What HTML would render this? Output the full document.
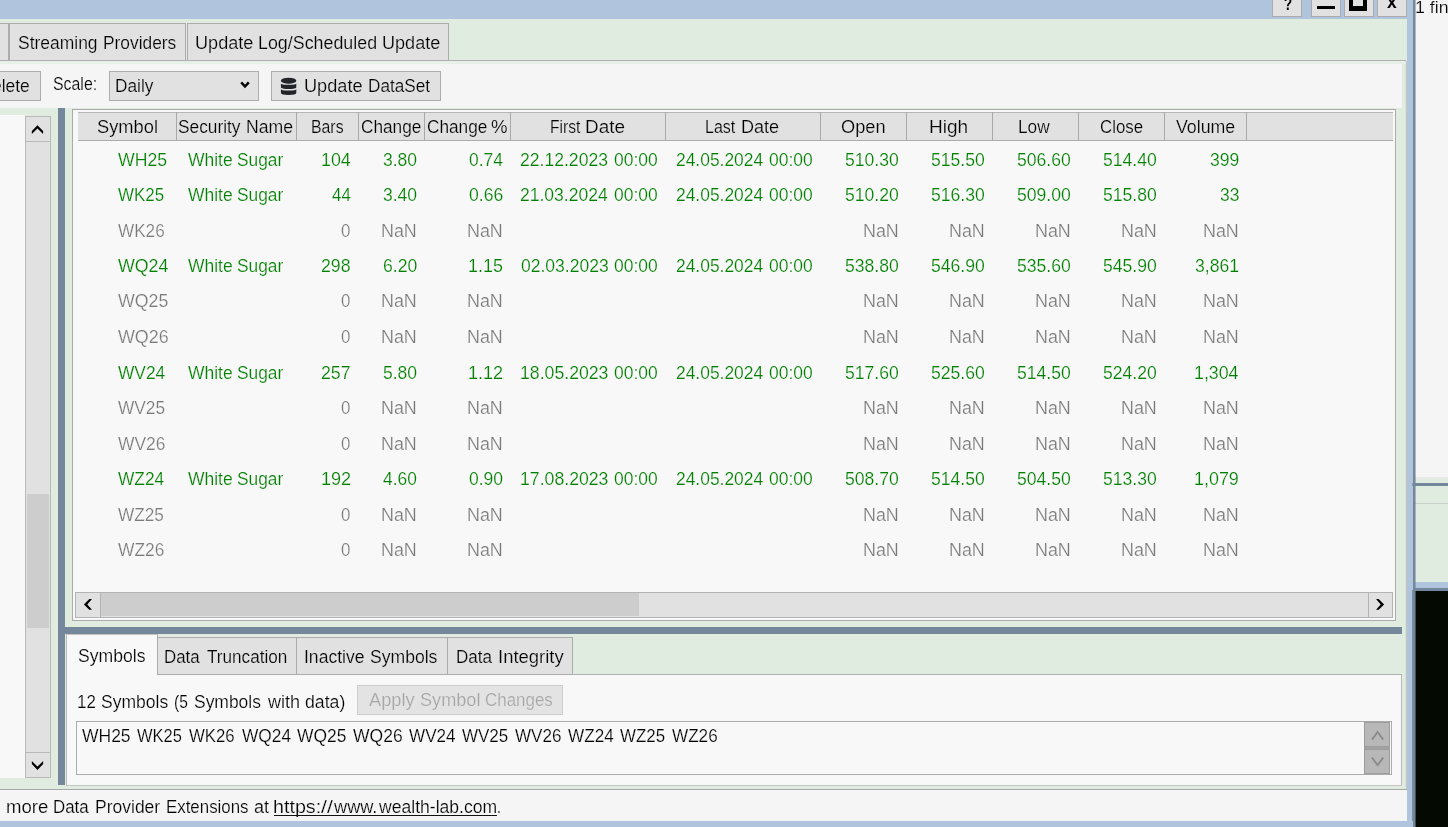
<!DOCTYPE html>
<html lang="en"><head><meta charset="utf-8"><title>Data Manager</title>
<style>
html,body{margin:0;padding:0}
body{width:1448px;height:827px;overflow:hidden;position:relative;background:#b0c4de;font-family:"Liberation Sans",sans-serif;}
#app{position:absolute;left:0;top:0;width:1448px;height:827px;overflow:hidden;will-change:transform}
#app>div,#app>svg,#app>span{position:absolute;display:block;box-sizing:content-box}
.t{font-size:18px;line-height:20px;white-space:nowrap;transform-origin:0 0;}
.u{text-decoration:underline;text-decoration-thickness:1px;text-underline-offset:2px}
</style></head><body><div id="app">
<div style="left:0px;top:0px;width:1448px;height:827px;background:#b0c4de;"></div>
<div style="left:0px;top:19px;width:1407px;height:802px;background:#e1ece1;"></div>
<div style="left:1413px;top:0px;width:2px;height:827px;background:#75889b;"></div>
<div style="left:1415px;top:0px;width:33px;height:477px;background:#f5f5f5;"></div>
<div style="left:1415px;top:477px;width:33px;height:2px;background:#e8e8e8;"></div>
<div style="left:1415px;top:479px;width:33px;height:4px;background:#e1ece1;"></div>
<div style="left:1412px;top:483px;width:36px;height:3px;background:#75889b;"></div>
<div style="left:1415px;top:486px;width:33px;height:96px;background:#e1ece1;"></div>
<div style="left:1415px;top:503px;width:33px;height:1px;background:#c9cfc9;"></div>
<div style="left:1415px;top:582px;width:33px;height:6px;background:#b0c4de;"></div>
<div style="left:1413px;top:588px;width:35px;height:3px;background:#75889b;"></div>
<div style="left:1415px;top:591px;width:33px;height:236px;background:#040a02;"></div>
<span class="t" style="left:1415px;top:-2.20px;color:#000;transform:scaleX(1.0446);font-size:17px;-webkit-text-stroke:0.2px #f5f5f5;">1 fin</span>
<div style="left:1272px;top:-4px;width:28px;height:19px;background:#e1e1e1;border:1px solid #acacac;"></div>
<div style="left:1311px;top:-4px;width:28px;height:19px;background:#e1e1e1;border:1px solid #acacac;"></div>
<div style="left:1344px;top:-4px;width:28px;height:19px;background:#e1e1e1;border:1px solid #acacac;"></div>
<div style="left:1377px;top:-4px;width:28px;height:19px;background:#e1e1e1;border:1px solid #acacac;"></div>
<span class="t" style="left:1284px;top:-6.00px;color:#000;transform:scaleX(0.7391);font-weight:bold;">?</span>
<div style="left:1316.5px;top:5.7px;width:18.5px;height:3.5px;background:#000;"></div>
<div style="left:1349.4px;top:-10px;width:10px;height:11.5px;border:4px solid #000;border-bottom-width:5px"></div>
<span class="t" style="left:1387px;top:-8.30px;color:#000;transform:scaleX(0.9687);font-weight:bold;">x</span>
<div style="left:-20px;top:23px;width:27px;height:36px;background:#e1e1e1;border:1px solid #acacac;"></div>
<div style="left:9px;top:23px;width:175px;height:36px;background:#e1e1e1;border:1px solid #acacac;"></div>
<div style="left:187px;top:23px;width:260px;height:36px;background:#e1e1e1;border:1px solid #acacac;"></div>
<div style="left:0px;top:60px;width:1406px;height:1px;background:#b0b0b0;"></div>
<div style="left:0px;top:61px;width:1407px;height:3px;background:#e6f0e6;"></div>
<div style="left:0px;top:64px;width:1402px;height:44.4px;background:#f5f5f5;"></div>
<span class="t" style="left:18px;top:32.80px;color:#000;transform:scaleX(0.9700);-webkit-text-stroke:0.2px #e1e1e1;">Streaming</span>
<span class="t" style="left:103px;top:32.80px;color:#000;transform:scaleX(0.9635);-webkit-text-stroke:0.2px #e1e1e1;">Providers</span>
<span class="t" style="left:195px;top:32.80px;color:#000;transform:scaleX(1.0054);-webkit-text-stroke:0.2px #e1e1e1;">Update</span>
<span class="t" style="left:258px;top:32.80px;color:#000;transform:scaleX(0.9915);-webkit-text-stroke:0.2px #e1e1e1;">Log/Scheduled</span>
<span class="t" style="left:382px;top:32.80px;color:#000;transform:scaleX(1.0036);-webkit-text-stroke:0.2px #e1e1e1;">Update</span>
<div style="left:-20px;top:71px;width:59px;height:28px;background:#e1e1e1;border:1px solid #adadad;"></div>
<span class="t" style="left:-8px;top:75.60px;color:#000;transform:scaleX(0.9679);-webkit-text-stroke:0.2px #e1e1e1;">elete</span>
<span class="t" style="left:53px;top:74.00px;color:#000;transform:scaleX(0.8821);-webkit-text-stroke:0.2px #f5f5f5;">Scale:</span>
<div style="left:109px;top:71px;width:148px;height:28px;background:#e1e1e1;border:1px solid #adadad;"></div>
<span class="t" style="left:115px;top:75.50px;color:#000;transform:scaleX(0.9583);-webkit-text-stroke:0.2px #e1e1e1;">Daily</span>
<svg style="left:238px;top:79px" width="14" height="12" viewBox="0 0 14 12"><path d="M3.2 3.3 L7 7.5 L10.8 3.3" fill="none" stroke="#000" stroke-width="2.5"/></svg>
<div style="left:271px;top:71px;width:168px;height:28px;background:#e1e1e1;border:1px solid #adadad;"></div>
<svg style="left:280px;top:77px" width="17" height="18" viewBox="0 0 17 18"><g fill="#212529">
<ellipse cx="8.6" cy="3.7" rx="7.7" ry="2.95"/>
<path d="M0.9 5.6 L0.9 6.4 Q0.9 7.7 8.6 7.7 Q16.3 7.7 16.3 6.4 L16.3 5.6 L16.3 10.2 Q16.3 12 8.6 12 Q0.9 12 0.9 10.2 Z"/>
<path d="M0.9 10.8 L0.9 11.9 Q0.9 13.5 8.6 13.5 Q16.3 13.5 16.3 11.9 L16.3 10.8 L16.3 15.8 Q16.3 18 8.6 18 Q0.9 18 0.9 15.8 Z"/>
</g></svg>
<span class="t" style="left:304px;top:75.50px;color:#000;transform:scaleX(1.0090);-webkit-text-stroke:0.2px #e1e1e1;">Update</span>
<span class="t" style="left:368px;top:75.50px;color:#000;transform:scaleX(0.9543);-webkit-text-stroke:0.2px #e1e1e1;">DataSet</span>
<div style="left:0px;top:115px;width:25px;height:663px;background:#f8f8f8;"></div>
<div style="left:25px;top:116px;width:26px;height:662px;background:#e1e1e1;"></div>
<div style="left:25px;top:116px;width:1px;height:662px;background:#b9b9b9;"></div>
<div style="left:50px;top:116px;width:1px;height:662px;background:#b9b9b9;"></div>
<div style="left:25px;top:116px;width:26px;height:1px;background:#b9b9b9;"></div>
<div style="left:25px;top:141px;width:26px;height:1px;background:#b9b9b9;"></div>
<div style="left:25px;top:752px;width:26px;height:1px;background:#b9b9b9;"></div>
<div style="left:25px;top:777px;width:26px;height:1px;background:#b9b9b9;"></div>
<div style="left:27px;top:494px;width:22.4px;height:134px;background:#cdcdcd;"></div>
<svg style="left:30px;top:124px" width="15" height="11" viewBox="0 0 15 11"><polygon points="1.85,9.90 1.85,6.90 7.45,1.20 13.10,6.90 13.10,9.90 7.45,4.50" fill="#000"/></svg>
<svg style="left:30px;top:760px" width="15" height="11" viewBox="0 0 15 11"><polygon points="1.85,1.10 1.85,4.10 7.45,9.90 13.15,4.10 13.15,1.10 7.45,6.60" fill="#000"/></svg>
<div style="left:58px;top:108.4px;width:7.2px;height:676.6px;background:#75889b;"></div>
<div style="left:65px;top:627px;width:1337px;height:7px;background:#75889b;"></div>
<div style="left:72px;top:109px;width:1322px;height:510px;background:#f8f8f8;border:1px solid #ababab;"></div>
<div style="left:78px;top:112px;width:1315px;height:28px;background:#e1e1e1;"></div>
<div style="left:78px;top:112px;width:1315px;height:1px;background:#b6b6b6;"></div>
<div style="left:78px;top:140px;width:1315px;height:1px;background:#acacac;"></div>
<div style="left:175.5px;top:112px;width:1px;height:28px;background:#a8a8a8;"></div>
<div style="left:296.0px;top:112px;width:1px;height:28px;background:#a8a8a8;"></div>
<div style="left:357.5px;top:112px;width:1px;height:28px;background:#a8a8a8;"></div>
<div style="left:424.0px;top:112px;width:1px;height:28px;background:#a8a8a8;"></div>
<div style="left:510.0px;top:112px;width:1px;height:28px;background:#a8a8a8;"></div>
<div style="left:665.0px;top:112px;width:1px;height:28px;background:#a8a8a8;"></div>
<div style="left:820.0px;top:112px;width:1px;height:28px;background:#a8a8a8;"></div>
<div style="left:906.0px;top:112px;width:1px;height:28px;background:#a8a8a8;"></div>
<div style="left:992.0px;top:112px;width:1px;height:28px;background:#a8a8a8;"></div>
<div style="left:1078.0px;top:112px;width:1px;height:28px;background:#a8a8a8;"></div>
<div style="left:1164.0px;top:112px;width:1px;height:28px;background:#a8a8a8;"></div>
<div style="left:1246.0px;top:112px;width:1px;height:28px;background:#a8a8a8;"></div>
<span class="t" style="left:97px;top:116.60px;color:#000;transform:scaleX(1.0155);-webkit-text-stroke:0.2px #e1e1e1;">Symbol</span>
<span class="t" style="left:178px;top:116.60px;color:#000;transform:scaleX(0.9610);-webkit-text-stroke:0.2px #e1e1e1;">Security</span>
<span class="t" style="left:246px;top:116.60px;color:#000;transform:scaleX(0.9803);-webkit-text-stroke:0.2px #e1e1e1;">Name</span>
<span class="t" style="left:311px;top:116.60px;color:#000;transform:scaleX(0.8793);-webkit-text-stroke:0.2px #e1e1e1;">Bars</span>
<span class="t" style="left:361px;top:116.60px;color:#000;transform:scaleX(0.9577);-webkit-text-stroke:0.2px #e1e1e1;">Change</span>
<span class="t" style="left:427px;top:116.60px;color:#000;transform:scaleX(0.9577);-webkit-text-stroke:0.2px #e1e1e1;">Change</span>
<span class="t" style="left:491px;top:116.60px;color:#000;transform:scaleX(1.0338);-webkit-text-stroke:0.2px #e1e1e1;">%</span>
<span class="t" style="left:550px;top:116.60px;color:#000;transform:scaleX(0.8683);-webkit-text-stroke:0.2px #e1e1e1;">First</span>
<span class="t" style="left:585px;top:116.60px;color:#000;transform:scaleX(1.0504);-webkit-text-stroke:0.2px #e1e1e1;">Date</span>
<span class="t" style="left:705px;top:116.60px;color:#000;transform:scaleX(0.8889);-webkit-text-stroke:0.2px #e1e1e1;">Last</span>
<span class="t" style="left:741px;top:116.60px;color:#000;transform:scaleX(1.0028);-webkit-text-stroke:0.2px #e1e1e1;">Date</span>
<span class="t" style="left:841px;top:116.60px;color:#000;transform:scaleX(1.0119);-webkit-text-stroke:0.2px #e1e1e1;">Open</span>
<span class="t" style="left:929px;top:116.60px;color:#000;transform:scaleX(1.0583);-webkit-text-stroke:0.2px #e1e1e1;">High</span>
<span class="t" style="left:1018px;top:116.60px;color:#000;transform:scaleX(0.9589);-webkit-text-stroke:0.2px #e1e1e1;">Low</span>
<span class="t" style="left:1100px;top:116.60px;color:#000;transform:scaleX(0.9368);-webkit-text-stroke:0.2px #e1e1e1;">Close</span>
<span class="t" style="left:1176px;top:116.60px;color:#000;transform:scaleX(0.9865);-webkit-text-stroke:0.2px #e1e1e1;">Volume</span>
<span class="t" style="left:118px;top:150.00px;color:#008000;transform:scaleX(0.9817);-webkit-text-stroke:0.2px #f8f8f8;">WH25</span>
<span class="t" style="left:188px;top:150.00px;color:#008000;transform:scaleX(0.9712);-webkit-text-stroke:0.2px #f8f8f8;">White</span>
<span class="t" style="left:237px;top:150.00px;color:#008000;transform:scaleX(0.9637);-webkit-text-stroke:0.2px #f8f8f8;">Sugar</span>
<span class="t" style="left:321px;top:150.00px;color:#008000;transform:scaleX(0.9897);-webkit-text-stroke:0.2px #f8f8f8;">104</span>
<span class="t" style="left:383px;top:150.00px;color:#008000;transform:scaleX(0.9735);-webkit-text-stroke:0.2px #f8f8f8;">3.80</span>
<span class="t" style="left:469px;top:150.00px;color:#008000;transform:scaleX(0.9678);-webkit-text-stroke:0.2px #f8f8f8;">0.74</span>
<span class="t" style="left:520px;top:150.00px;color:#008000;transform:scaleX(0.9762);-webkit-text-stroke:0.2px #f8f8f8;">22.12.2023</span>
<span class="t" style="left:614px;top:150.00px;color:#008000;transform:scaleX(0.9702);-webkit-text-stroke:0.2px #f8f8f8;">00:00</span>
<span class="t" style="left:676px;top:150.00px;color:#008000;transform:scaleX(0.9673);-webkit-text-stroke:0.2px #f8f8f8;">24.05.2024</span>
<span class="t" style="left:769px;top:150.00px;color:#008000;transform:scaleX(0.9702);-webkit-text-stroke:0.2px #f8f8f8;">00:00</span>
<span class="t" style="left:845px;top:150.00px;color:#008000;transform:scaleX(0.9767);-webkit-text-stroke:0.2px #f8f8f8;">510.30</span>
<span class="t" style="left:931px;top:150.00px;color:#008000;transform:scaleX(0.9767);-webkit-text-stroke:0.2px #f8f8f8;">515.50</span>
<span class="t" style="left:1017px;top:150.00px;color:#008000;transform:scaleX(0.9767);-webkit-text-stroke:0.2px #f8f8f8;">506.60</span>
<span class="t" style="left:1103px;top:150.00px;color:#008000;transform:scaleX(0.9767);-webkit-text-stroke:0.2px #f8f8f8;">514.40</span>
<span class="t" style="left:1210px;top:150.00px;color:#008000;transform:scaleX(0.9758);-webkit-text-stroke:0.2px #f8f8f8;">399</span>
<span class="t" style="left:118px;top:185.00px;color:#008000;transform:scaleX(0.9398);-webkit-text-stroke:0.2px #f8f8f8;">WK25</span>
<span class="t" style="left:188px;top:185.00px;color:#008000;transform:scaleX(0.9712);-webkit-text-stroke:0.2px #f8f8f8;">White</span>
<span class="t" style="left:237px;top:185.00px;color:#008000;transform:scaleX(0.9637);-webkit-text-stroke:0.2px #f8f8f8;">Sugar</span>
<span class="t" style="left:332px;top:185.00px;color:#008000;transform:scaleX(0.9393);-webkit-text-stroke:0.2px #f8f8f8;">44</span>
<span class="t" style="left:383px;top:185.00px;color:#008000;transform:scaleX(0.9735);-webkit-text-stroke:0.2px #f8f8f8;">3.40</span>
<span class="t" style="left:469px;top:185.00px;color:#008000;transform:scaleX(0.9764);-webkit-text-stroke:0.2px #f8f8f8;">0.66</span>
<span class="t" style="left:520px;top:185.00px;color:#008000;transform:scaleX(0.9729);-webkit-text-stroke:0.2px #f8f8f8;">21.03.2024</span>
<span class="t" style="left:614px;top:185.00px;color:#008000;transform:scaleX(0.9702);-webkit-text-stroke:0.2px #f8f8f8;">00:00</span>
<span class="t" style="left:676px;top:185.00px;color:#008000;transform:scaleX(0.9673);-webkit-text-stroke:0.2px #f8f8f8;">24.05.2024</span>
<span class="t" style="left:769px;top:185.00px;color:#008000;transform:scaleX(0.9702);-webkit-text-stroke:0.2px #f8f8f8;">00:00</span>
<span class="t" style="left:845px;top:185.00px;color:#008000;transform:scaleX(0.9767);-webkit-text-stroke:0.2px #f8f8f8;">510.20</span>
<span class="t" style="left:931px;top:185.00px;color:#008000;transform:scaleX(0.9767);-webkit-text-stroke:0.2px #f8f8f8;">516.30</span>
<span class="t" style="left:1017px;top:185.00px;color:#008000;transform:scaleX(0.9767);-webkit-text-stroke:0.2px #f8f8f8;">509.00</span>
<span class="t" style="left:1103px;top:185.00px;color:#008000;transform:scaleX(0.9767);-webkit-text-stroke:0.2px #f8f8f8;">515.80</span>
<span class="t" style="left:1220px;top:185.00px;color:#008000;transform:scaleX(0.9697);-webkit-text-stroke:0.2px #f8f8f8;">33</span>
<span class="t" style="left:118px;top:221.00px;color:#7a7a7a;transform:scaleX(0.9522);-webkit-text-stroke:0.2px #f8f8f8;">WK26</span>
<span class="t" style="left:341px;top:221.00px;color:#7a7a7a;transform:scaleX(0.9384);-webkit-text-stroke:0.2px #f8f8f8;">0</span>
<span class="t" style="left:381px;top:221.00px;color:#7a7a7a;transform:scaleX(0.9939);-webkit-text-stroke:0.2px #f8f8f8;">NaN</span>
<span class="t" style="left:467px;top:221.00px;color:#7a7a7a;transform:scaleX(0.9939);-webkit-text-stroke:0.2px #f8f8f8;">NaN</span>
<span class="t" style="left:863px;top:221.00px;color:#7a7a7a;transform:scaleX(0.9939);-webkit-text-stroke:0.2px #f8f8f8;">NaN</span>
<span class="t" style="left:949px;top:221.00px;color:#7a7a7a;transform:scaleX(0.9939);-webkit-text-stroke:0.2px #f8f8f8;">NaN</span>
<span class="t" style="left:1035px;top:221.00px;color:#7a7a7a;transform:scaleX(0.9939);-webkit-text-stroke:0.2px #f8f8f8;">NaN</span>
<span class="t" style="left:1121px;top:221.00px;color:#7a7a7a;transform:scaleX(0.9939);-webkit-text-stroke:0.2px #f8f8f8;">NaN</span>
<span class="t" style="left:1203px;top:221.00px;color:#7a7a7a;transform:scaleX(0.9939);-webkit-text-stroke:0.2px #f8f8f8;">NaN</span>
<span class="t" style="left:118px;top:256.00px;color:#008000;transform:scaleX(0.9881);-webkit-text-stroke:0.2px #f8f8f8;">WQ24</span>
<span class="t" style="left:188px;top:256.00px;color:#008000;transform:scaleX(0.9712);-webkit-text-stroke:0.2px #f8f8f8;">White</span>
<span class="t" style="left:237px;top:256.00px;color:#008000;transform:scaleX(0.9637);-webkit-text-stroke:0.2px #f8f8f8;">Sugar</span>
<span class="t" style="left:321px;top:256.00px;color:#008000;transform:scaleX(0.9827);-webkit-text-stroke:0.2px #f8f8f8;">298</span>
<span class="t" style="left:383px;top:256.00px;color:#008000;transform:scaleX(0.9793);-webkit-text-stroke:0.2px #f8f8f8;">6.20</span>
<span class="t" style="left:468px;top:256.00px;color:#008000;transform:scaleX(0.9942);-webkit-text-stroke:0.2px #f8f8f8;">1.15</span>
<span class="t" style="left:521px;top:256.00px;color:#008000;transform:scaleX(0.9740);-webkit-text-stroke:0.2px #f8f8f8;">02.03.2023</span>
<span class="t" style="left:614px;top:256.00px;color:#008000;transform:scaleX(0.9702);-webkit-text-stroke:0.2px #f8f8f8;">00:00</span>
<span class="t" style="left:676px;top:256.00px;color:#008000;transform:scaleX(0.9673);-webkit-text-stroke:0.2px #f8f8f8;">24.05.2024</span>
<span class="t" style="left:769px;top:256.00px;color:#008000;transform:scaleX(0.9702);-webkit-text-stroke:0.2px #f8f8f8;">00:00</span>
<span class="t" style="left:845px;top:256.00px;color:#008000;transform:scaleX(0.9767);-webkit-text-stroke:0.2px #f8f8f8;">538.80</span>
<span class="t" style="left:931px;top:256.00px;color:#008000;transform:scaleX(0.9767);-webkit-text-stroke:0.2px #f8f8f8;">546.90</span>
<span class="t" style="left:1017px;top:256.00px;color:#008000;transform:scaleX(0.9767);-webkit-text-stroke:0.2px #f8f8f8;">535.60</span>
<span class="t" style="left:1103px;top:256.00px;color:#008000;transform:scaleX(0.9767);-webkit-text-stroke:0.2px #f8f8f8;">545.90</span>
<span class="t" style="left:1195px;top:256.00px;color:#008000;transform:scaleX(0.9789);-webkit-text-stroke:0.2px #f8f8f8;">3,861</span>
<span class="t" style="left:118px;top:291.00px;color:#7a7a7a;transform:scaleX(0.9861);-webkit-text-stroke:0.2px #f8f8f8;">WQ25</span>
<span class="t" style="left:341px;top:291.00px;color:#7a7a7a;transform:scaleX(0.9384);-webkit-text-stroke:0.2px #f8f8f8;">0</span>
<span class="t" style="left:381px;top:291.00px;color:#7a7a7a;transform:scaleX(0.9939);-webkit-text-stroke:0.2px #f8f8f8;">NaN</span>
<span class="t" style="left:467px;top:291.00px;color:#7a7a7a;transform:scaleX(0.9939);-webkit-text-stroke:0.2px #f8f8f8;">NaN</span>
<span class="t" style="left:863px;top:291.00px;color:#7a7a7a;transform:scaleX(0.9939);-webkit-text-stroke:0.2px #f8f8f8;">NaN</span>
<span class="t" style="left:949px;top:291.00px;color:#7a7a7a;transform:scaleX(0.9939);-webkit-text-stroke:0.2px #f8f8f8;">NaN</span>
<span class="t" style="left:1035px;top:291.00px;color:#7a7a7a;transform:scaleX(0.9939);-webkit-text-stroke:0.2px #f8f8f8;">NaN</span>
<span class="t" style="left:1121px;top:291.00px;color:#7a7a7a;transform:scaleX(0.9939);-webkit-text-stroke:0.2px #f8f8f8;">NaN</span>
<span class="t" style="left:1203px;top:291.00px;color:#7a7a7a;transform:scaleX(0.9939);-webkit-text-stroke:0.2px #f8f8f8;">NaN</span>
<span class="t" style="left:118px;top:327.00px;color:#7a7a7a;transform:scaleX(0.9920);-webkit-text-stroke:0.2px #f8f8f8;">WQ26</span>
<span class="t" style="left:341px;top:327.00px;color:#7a7a7a;transform:scaleX(0.9384);-webkit-text-stroke:0.2px #f8f8f8;">0</span>
<span class="t" style="left:381px;top:327.00px;color:#7a7a7a;transform:scaleX(0.9939);-webkit-text-stroke:0.2px #f8f8f8;">NaN</span>
<span class="t" style="left:467px;top:327.00px;color:#7a7a7a;transform:scaleX(0.9939);-webkit-text-stroke:0.2px #f8f8f8;">NaN</span>
<span class="t" style="left:863px;top:327.00px;color:#7a7a7a;transform:scaleX(0.9939);-webkit-text-stroke:0.2px #f8f8f8;">NaN</span>
<span class="t" style="left:949px;top:327.00px;color:#7a7a7a;transform:scaleX(0.9939);-webkit-text-stroke:0.2px #f8f8f8;">NaN</span>
<span class="t" style="left:1035px;top:327.00px;color:#7a7a7a;transform:scaleX(0.9939);-webkit-text-stroke:0.2px #f8f8f8;">NaN</span>
<span class="t" style="left:1121px;top:327.00px;color:#7a7a7a;transform:scaleX(0.9939);-webkit-text-stroke:0.2px #f8f8f8;">NaN</span>
<span class="t" style="left:1203px;top:327.00px;color:#7a7a7a;transform:scaleX(0.9939);-webkit-text-stroke:0.2px #f8f8f8;">NaN</span>
<span class="t" style="left:118px;top:363.00px;color:#008000;transform:scaleX(0.9628);-webkit-text-stroke:0.2px #f8f8f8;">WV24</span>
<span class="t" style="left:188px;top:363.00px;color:#008000;transform:scaleX(0.9712);-webkit-text-stroke:0.2px #f8f8f8;">White</span>
<span class="t" style="left:237px;top:363.00px;color:#008000;transform:scaleX(0.9637);-webkit-text-stroke:0.2px #f8f8f8;">Sugar</span>
<span class="t" style="left:321px;top:363.00px;color:#008000;transform:scaleX(0.9862);-webkit-text-stroke:0.2px #f8f8f8;">257</span>
<span class="t" style="left:383px;top:363.00px;color:#008000;transform:scaleX(0.9735);-webkit-text-stroke:0.2px #f8f8f8;">5.80</span>
<span class="t" style="left:468px;top:363.00px;color:#008000;transform:scaleX(1.0003);-webkit-text-stroke:0.2px #f8f8f8;">1.12</span>
<span class="t" style="left:520px;top:363.00px;color:#008000;transform:scaleX(0.9818);-webkit-text-stroke:0.2px #f8f8f8;">18.05.2023</span>
<span class="t" style="left:614px;top:363.00px;color:#008000;transform:scaleX(0.9702);-webkit-text-stroke:0.2px #f8f8f8;">00:00</span>
<span class="t" style="left:676px;top:363.00px;color:#008000;transform:scaleX(0.9673);-webkit-text-stroke:0.2px #f8f8f8;">24.05.2024</span>
<span class="t" style="left:769px;top:363.00px;color:#008000;transform:scaleX(0.9702);-webkit-text-stroke:0.2px #f8f8f8;">00:00</span>
<span class="t" style="left:845px;top:363.00px;color:#008000;transform:scaleX(0.9767);-webkit-text-stroke:0.2px #f8f8f8;">517.60</span>
<span class="t" style="left:931px;top:363.00px;color:#008000;transform:scaleX(0.9767);-webkit-text-stroke:0.2px #f8f8f8;">525.60</span>
<span class="t" style="left:1017px;top:363.00px;color:#008000;transform:scaleX(0.9767);-webkit-text-stroke:0.2px #f8f8f8;">514.50</span>
<span class="t" style="left:1103px;top:363.00px;color:#008000;transform:scaleX(0.9767);-webkit-text-stroke:0.2px #f8f8f8;">524.20</span>
<span class="t" style="left:1194px;top:363.00px;color:#008000;transform:scaleX(0.9879);-webkit-text-stroke:0.2px #f8f8f8;">1,304</span>
<span class="t" style="left:118px;top:398.00px;color:#7a7a7a;transform:scaleX(0.9606);-webkit-text-stroke:0.2px #f8f8f8;">WV25</span>
<span class="t" style="left:341px;top:398.00px;color:#7a7a7a;transform:scaleX(0.9384);-webkit-text-stroke:0.2px #f8f8f8;">0</span>
<span class="t" style="left:381px;top:398.00px;color:#7a7a7a;transform:scaleX(0.9939);-webkit-text-stroke:0.2px #f8f8f8;">NaN</span>
<span class="t" style="left:467px;top:398.00px;color:#7a7a7a;transform:scaleX(0.9939);-webkit-text-stroke:0.2px #f8f8f8;">NaN</span>
<span class="t" style="left:863px;top:398.00px;color:#7a7a7a;transform:scaleX(0.9939);-webkit-text-stroke:0.2px #f8f8f8;">NaN</span>
<span class="t" style="left:949px;top:398.00px;color:#7a7a7a;transform:scaleX(0.9939);-webkit-text-stroke:0.2px #f8f8f8;">NaN</span>
<span class="t" style="left:1035px;top:398.00px;color:#7a7a7a;transform:scaleX(0.9939);-webkit-text-stroke:0.2px #f8f8f8;">NaN</span>
<span class="t" style="left:1121px;top:398.00px;color:#7a7a7a;transform:scaleX(0.9939);-webkit-text-stroke:0.2px #f8f8f8;">NaN</span>
<span class="t" style="left:1203px;top:398.00px;color:#7a7a7a;transform:scaleX(0.9939);-webkit-text-stroke:0.2px #f8f8f8;">NaN</span>
<span class="t" style="left:118px;top:434.00px;color:#7a7a7a;transform:scaleX(0.9667);-webkit-text-stroke:0.2px #f8f8f8;">WV26</span>
<span class="t" style="left:341px;top:434.00px;color:#7a7a7a;transform:scaleX(0.9384);-webkit-text-stroke:0.2px #f8f8f8;">0</span>
<span class="t" style="left:381px;top:434.00px;color:#7a7a7a;transform:scaleX(0.9939);-webkit-text-stroke:0.2px #f8f8f8;">NaN</span>
<span class="t" style="left:467px;top:434.00px;color:#7a7a7a;transform:scaleX(0.9939);-webkit-text-stroke:0.2px #f8f8f8;">NaN</span>
<span class="t" style="left:863px;top:434.00px;color:#7a7a7a;transform:scaleX(0.9939);-webkit-text-stroke:0.2px #f8f8f8;">NaN</span>
<span class="t" style="left:949px;top:434.00px;color:#7a7a7a;transform:scaleX(0.9939);-webkit-text-stroke:0.2px #f8f8f8;">NaN</span>
<span class="t" style="left:1035px;top:434.00px;color:#7a7a7a;transform:scaleX(0.9939);-webkit-text-stroke:0.2px #f8f8f8;">NaN</span>
<span class="t" style="left:1121px;top:434.00px;color:#7a7a7a;transform:scaleX(0.9939);-webkit-text-stroke:0.2px #f8f8f8;">NaN</span>
<span class="t" style="left:1203px;top:434.00px;color:#7a7a7a;transform:scaleX(0.9939);-webkit-text-stroke:0.2px #f8f8f8;">NaN</span>
<span class="t" style="left:118px;top:469.00px;color:#008000;transform:scaleX(0.9620);-webkit-text-stroke:0.2px #f8f8f8;">WZ24</span>
<span class="t" style="left:188px;top:469.00px;color:#008000;transform:scaleX(0.9712);-webkit-text-stroke:0.2px #f8f8f8;">White</span>
<span class="t" style="left:237px;top:469.00px;color:#008000;transform:scaleX(0.9637);-webkit-text-stroke:0.2px #f8f8f8;">Sugar</span>
<span class="t" style="left:321px;top:469.00px;color:#008000;transform:scaleX(1.0040);-webkit-text-stroke:0.2px #f8f8f8;">192</span>
<span class="t" style="left:383px;top:469.00px;color:#008000;transform:scaleX(0.9649);-webkit-text-stroke:0.2px #f8f8f8;">4.60</span>
<span class="t" style="left:469px;top:469.00px;color:#008000;transform:scaleX(0.9735);-webkit-text-stroke:0.2px #f8f8f8;">0.90</span>
<span class="t" style="left:520px;top:469.00px;color:#008000;transform:scaleX(0.9818);-webkit-text-stroke:0.2px #f8f8f8;">17.08.2023</span>
<span class="t" style="left:614px;top:469.00px;color:#008000;transform:scaleX(0.9702);-webkit-text-stroke:0.2px #f8f8f8;">00:00</span>
<span class="t" style="left:676px;top:469.00px;color:#008000;transform:scaleX(0.9673);-webkit-text-stroke:0.2px #f8f8f8;">24.05.2024</span>
<span class="t" style="left:769px;top:469.00px;color:#008000;transform:scaleX(0.9702);-webkit-text-stroke:0.2px #f8f8f8;">00:00</span>
<span class="t" style="left:845px;top:469.00px;color:#008000;transform:scaleX(0.9767);-webkit-text-stroke:0.2px #f8f8f8;">508.70</span>
<span class="t" style="left:931px;top:469.00px;color:#008000;transform:scaleX(0.9767);-webkit-text-stroke:0.2px #f8f8f8;">514.50</span>
<span class="t" style="left:1017px;top:469.00px;color:#008000;transform:scaleX(0.9767);-webkit-text-stroke:0.2px #f8f8f8;">504.50</span>
<span class="t" style="left:1103px;top:469.00px;color:#008000;transform:scaleX(0.9767);-webkit-text-stroke:0.2px #f8f8f8;">513.30</span>
<span class="t" style="left:1194px;top:469.00px;color:#008000;transform:scaleX(0.9949);-webkit-text-stroke:0.2px #f8f8f8;">1,079</span>
<span class="t" style="left:118px;top:505.00px;color:#7a7a7a;transform:scaleX(0.9555);-webkit-text-stroke:0.2px #f8f8f8;">WZ25</span>
<span class="t" style="left:341px;top:505.00px;color:#7a7a7a;transform:scaleX(0.9384);-webkit-text-stroke:0.2px #f8f8f8;">0</span>
<span class="t" style="left:381px;top:505.00px;color:#7a7a7a;transform:scaleX(0.9939);-webkit-text-stroke:0.2px #f8f8f8;">NaN</span>
<span class="t" style="left:467px;top:505.00px;color:#7a7a7a;transform:scaleX(0.9939);-webkit-text-stroke:0.2px #f8f8f8;">NaN</span>
<span class="t" style="left:863px;top:505.00px;color:#7a7a7a;transform:scaleX(0.9939);-webkit-text-stroke:0.2px #f8f8f8;">NaN</span>
<span class="t" style="left:949px;top:505.00px;color:#7a7a7a;transform:scaleX(0.9939);-webkit-text-stroke:0.2px #f8f8f8;">NaN</span>
<span class="t" style="left:1035px;top:505.00px;color:#7a7a7a;transform:scaleX(0.9939);-webkit-text-stroke:0.2px #f8f8f8;">NaN</span>
<span class="t" style="left:1121px;top:505.00px;color:#7a7a7a;transform:scaleX(0.9939);-webkit-text-stroke:0.2px #f8f8f8;">NaN</span>
<span class="t" style="left:1203px;top:505.00px;color:#7a7a7a;transform:scaleX(0.9939);-webkit-text-stroke:0.2px #f8f8f8;">NaN</span>
<span class="t" style="left:118px;top:540.00px;color:#7a7a7a;transform:scaleX(0.9660);-webkit-text-stroke:0.2px #f8f8f8;">WZ26</span>
<span class="t" style="left:341px;top:540.00px;color:#7a7a7a;transform:scaleX(0.9384);-webkit-text-stroke:0.2px #f8f8f8;">0</span>
<span class="t" style="left:381px;top:540.00px;color:#7a7a7a;transform:scaleX(0.9939);-webkit-text-stroke:0.2px #f8f8f8;">NaN</span>
<span class="t" style="left:467px;top:540.00px;color:#7a7a7a;transform:scaleX(0.9939);-webkit-text-stroke:0.2px #f8f8f8;">NaN</span>
<span class="t" style="left:863px;top:540.00px;color:#7a7a7a;transform:scaleX(0.9939);-webkit-text-stroke:0.2px #f8f8f8;">NaN</span>
<span class="t" style="left:949px;top:540.00px;color:#7a7a7a;transform:scaleX(0.9939);-webkit-text-stroke:0.2px #f8f8f8;">NaN</span>
<span class="t" style="left:1035px;top:540.00px;color:#7a7a7a;transform:scaleX(0.9939);-webkit-text-stroke:0.2px #f8f8f8;">NaN</span>
<span class="t" style="left:1121px;top:540.00px;color:#7a7a7a;transform:scaleX(0.9939);-webkit-text-stroke:0.2px #f8f8f8;">NaN</span>
<span class="t" style="left:1203px;top:540.00px;color:#7a7a7a;transform:scaleX(0.9939);-webkit-text-stroke:0.2px #f8f8f8;">NaN</span>
<div style="left:75px;top:592px;width:1318px;height:25.5px;background:#e1e1e1;"></div>
<div style="left:75px;top:592px;width:1318px;height:1px;background:#b4b4b4;"></div>
<div style="left:75px;top:616.6px;width:1318px;height:1px;background:#b4b4b4;"></div>
<div style="left:75px;top:592px;width:1px;height:25.5px;background:#b4b4b4;"></div>
<div style="left:100px;top:592px;width:1px;height:25.5px;background:#b4b4b4;"></div>
<div style="left:1367.5px;top:592px;width:1px;height:25.5px;background:#b4b4b4;"></div>
<div style="left:1392px;top:592px;width:1px;height:25.5px;background:#b4b4b4;"></div>
<div style="left:101px;top:593px;width:537.8px;height:23px;background:#cdcdcd;"></div>
<svg style="left:82px;top:598px" width="11" height="13" viewBox="0 0 11 13"><polygon points="10.00,1.00 7.30,1.00 1.90,6.40 7.30,11.85 10.00,11.85 5.30,6.40" fill="#000"/></svg>
<svg style="left:1375px;top:598px" width="11" height="13" viewBox="0 0 11 13"><polygon points="1.00,1.00 3.70,1.00 9.10,6.40 3.70,11.85 1.00,11.85 5.70,6.40" fill="#000"/></svg>
<div style="left:66px;top:674.5px;width:1336px;height:111px;background:#f8f8f8;"></div>
<div style="left:157px;top:674.2px;width:1245px;height:1px;background:#b0b0b0;"></div>
<div style="left:1401px;top:674.2px;width:1px;height:111px;background:#b8b8b8;"></div>
<div style="left:65.6px;top:784.6px;width:1336.4px;height:1px;background:#c4c4c4;"></div>
<div style="left:66px;top:634px;width:92px;height:41px;background:#f8f8f8;"></div>
<div style="left:66px;top:634px;width:1px;height:151px;background:#b8b8b8;"></div>
<div style="left:66px;top:634px;width:92px;height:1px;background:#c4c4c4;"></div>
<div style="left:157px;top:634px;width:1px;height:41px;background:#b0b0b0;"></div>
<div style="left:157px;top:637px;width:137.5px;height:36px;background:#e1e1e1;border:1px solid #acacac;"></div>
<div style="left:296px;top:637px;width:149.5px;height:36px;background:#e1e1e1;border:1px solid #acacac;"></div>
<div style="left:447px;top:637px;width:124px;height:36px;background:#e1e1e1;border:1px solid #acacac;"></div>
<span class="t" style="left:78px;top:646.00px;color:#000;transform:scaleX(0.9778);-webkit-text-stroke:0.2px #f8f8f8;">Symbols</span>
<span class="t" style="left:164px;top:647.00px;color:#000;transform:scaleX(0.9397);-webkit-text-stroke:0.2px #e1e1e1;">Data</span>
<span class="t" style="left:207px;top:647.00px;color:#000;transform:scaleX(0.9517);-webkit-text-stroke:0.2px #e1e1e1;">Truncation</span>
<span class="t" style="left:304px;top:647.00px;color:#000;transform:scaleX(0.9748);-webkit-text-stroke:0.2px #e1e1e1;">Inactive</span>
<span class="t" style="left:370px;top:647.00px;color:#000;transform:scaleX(0.9763);-webkit-text-stroke:0.2px #e1e1e1;">Symbols</span>
<span class="t" style="left:456px;top:647.00px;color:#000;transform:scaleX(0.9479);-webkit-text-stroke:0.2px #e1e1e1;">Data</span>
<span class="t" style="left:498px;top:647.00px;color:#000;transform:scaleX(1.0257);-webkit-text-stroke:0.2px #e1e1e1;">Integrity</span>
<span class="t" style="left:77px;top:692.00px;color:#000;transform:scaleX(0.9379);-webkit-text-stroke:0.2px #f8f8f8;">12</span>
<span class="t" style="left:101px;top:692.00px;color:#000;transform:scaleX(0.9733);-webkit-text-stroke:0.2px #f8f8f8;">Symbols</span>
<span class="t" style="left:174px;top:692.00px;color:#000;transform:scaleX(0.8662);-webkit-text-stroke:0.2px #f8f8f8;">(5</span>
<span class="t" style="left:194px;top:692.00px;color:#000;transform:scaleX(0.9689);-webkit-text-stroke:0.2px #f8f8f8;">Symbols</span>
<span class="t" style="left:268px;top:692.00px;color:#000;transform:scaleX(1.0032);-webkit-text-stroke:0.2px #f8f8f8;">with</span>
<span class="t" style="left:305px;top:692.00px;color:#000;transform:scaleX(0.9821);-webkit-text-stroke:0.2px #f8f8f8;">data)</span>
<div style="left:357px;top:685px;width:204px;height:28px;background:#e3e3e3;border:1px solid #cfcfcf;"></div>
<span class="t" style="left:369px;top:690.00px;color:#a6a6a6;transform:scaleX(1.0134);-webkit-text-stroke:0.2px #e3e3e3;">Apply</span>
<span class="t" style="left:420px;top:690.00px;color:#a6a6a6;transform:scaleX(1.0069);-webkit-text-stroke:0.2px #e3e3e3;">Symbol</span>
<span class="t" style="left:485px;top:690.00px;color:#a6a6a6;transform:scaleX(0.9404);-webkit-text-stroke:0.2px #e3e3e3;">Changes</span>
<div style="left:76px;top:721.3px;width:1314px;height:51.700000000000045px;background:#f8f8f8;border:1px solid #ababab;"></div>
<span class="t" style="left:82px;top:726.00px;color:#000;transform:scaleX(0.9715);-webkit-text-stroke:0.2px #f8f8f8;">WH25</span>
<span class="t" style="left:137px;top:726.00px;color:#000;transform:scaleX(0.9149);-webkit-text-stroke:0.2px #f8f8f8;">WK25</span>
<span class="t" style="left:189px;top:726.00px;color:#000;transform:scaleX(0.9314);-webkit-text-stroke:0.2px #f8f8f8;">WK26</span>
<span class="t" style="left:242px;top:726.00px;color:#000;transform:scaleX(0.9623);-webkit-text-stroke:0.2px #f8f8f8;">WQ24</span>
<span class="t" style="left:297px;top:726.00px;color:#000;transform:scaleX(0.9681);-webkit-text-stroke:0.2px #f8f8f8;">WQ25</span>
<span class="t" style="left:353px;top:726.00px;color:#000;transform:scaleX(0.9741);-webkit-text-stroke:0.2px #f8f8f8;">WQ26</span>
<span class="t" style="left:409px;top:726.00px;color:#000;transform:scaleX(0.9504);-webkit-text-stroke:0.2px #f8f8f8;">WV24</span>
<span class="t" style="left:462px;top:726.00px;color:#000;transform:scaleX(0.9440);-webkit-text-stroke:0.2px #f8f8f8;">WV25</span>
<span class="t" style="left:515px;top:726.00px;color:#000;transform:scaleX(0.9480);-webkit-text-stroke:0.2px #f8f8f8;">WV26</span>
<span class="t" style="left:568px;top:726.00px;color:#000;transform:scaleX(0.9515);-webkit-text-stroke:0.2px #f8f8f8;">WZ24</span>
<span class="t" style="left:620px;top:726.00px;color:#000;transform:scaleX(0.9386);-webkit-text-stroke:0.2px #f8f8f8;">WZ25</span>
<span class="t" style="left:672px;top:726.00px;color:#000;transform:scaleX(0.9512);-webkit-text-stroke:0.2px #f8f8f8;">WZ26</span>
<div style="left:1364.3px;top:722.2px;width:25.9px;height:51.8px;background:#a2a2a2;"></div>
<div style="left:1364.3px;top:722.2px;width:23.90000000000009px;height:23.199999999999932px;background:#b8b8b8;border:1px solid #9c9c9c;"></div>
<div style="left:1364.3px;top:748.6px;width:23.90000000000009px;height:23.399999999999977px;background:#b8b8b8;border:1px solid #9c9c9c;"></div>
<svg style="left:1369px;top:728px" width="18" height="14" viewBox="0 0 18 14"><path d="M3 11.6 L8.6 4 L14.2 11.6" fill="none" stroke="#8a8a8a" stroke-width="1.8"/></svg>
<svg style="left:1369px;top:754px" width="18" height="14" viewBox="0 0 18 14"><path d="M3 3.6 L8.6 11.2 L14.2 3.6" fill="none" stroke="#8a8a8a" stroke-width="1.8"/></svg>
<div style="left:0px;top:789px;width:1407px;height:1px;background:#a8a8a8;"></div>
<div style="left:0px;top:790px;width:1407px;height:31px;background:#f5f5f5;"></div>
<span class="t" style="left:6px;top:796.60px;color:#000;transform:scaleX(1.0308);-webkit-text-stroke:0.2px #f5f5f5;">more</span>
<span class="t" style="left:53px;top:796.60px;color:#000;transform:scaleX(0.9397);-webkit-text-stroke:0.2px #f5f5f5;">Data</span>
<span class="t" style="left:95px;top:796.60px;color:#000;transform:scaleX(0.9724);-webkit-text-stroke:0.2px #f5f5f5;">Provider</span>
<span class="t" style="left:166px;top:796.60px;color:#000;transform:scaleX(0.9371);-webkit-text-stroke:0.2px #f5f5f5;">Extensions</span>
<span class="t" style="left:254px;top:796.60px;color:#000;transform:scaleX(1.0000);-webkit-text-stroke:0.2px #f5f5f5;">at</span>
<span class="t" style="left:273px;top:796.60px;color:#000;transform:scaleX(1.0947);-webkit-text-stroke:0.2px #f5f5f5;">https:</span>
<span class="t" style="left:321px;top:796.60px;color:#000;transform:scaleX(1.1800);-webkit-text-stroke:0.2px #f5f5f5;">//</span>
<span class="t" style="left:334px;top:796.60px;color:#000;transform:scaleX(1.0097);-webkit-text-stroke:0.2px #f5f5f5;">www.</span>
<span class="t" style="left:379px;top:796.60px;color:#000;transform:scaleX(0.9766);-webkit-text-stroke:0.2px #f5f5f5;">wealth-lab</span>
<span class="t" style="left:459px;top:796.60px;color:#000;transform:scaleX(0.9751);-webkit-text-stroke:0.2px #f5f5f5;">.com</span>
<div style="left:274px;top:815px;width:223px;height:1.2px;background:#111;"></div>
<span class="t" style="left:497px;top:796.60px;color:#000;transform:scaleX(0.7778);-webkit-text-stroke:0.2px #f5f5f5;">.</span>
<div style="left:1407px;top:0px;width:6px;height:827px;background:#b0c4de;"></div>
<div style="left:1406px;top:61px;width:1px;height:728px;background:#c2c9c2;"></div>
<div style="left:1405px;top:61px;width:1px;height:728px;background:rgba(0,0,0,0.04);"></div>
<div style="left:1415px;top:0px;width:1px;height:827px;background:rgba(115,135,155,0.55);"></div>
<div style="left:1412px;top:483px;width:1px;height:3px;background:rgba(115,135,155,0.7);"></div>
<div style="left:1412px;top:590px;width:1px;height:237px;background:rgba(115,135,155,0.85);"></div>
<div style="left:0px;top:821px;width:1413px;height:6px;background:#b0c4de;"></div>
</div></body></html>
